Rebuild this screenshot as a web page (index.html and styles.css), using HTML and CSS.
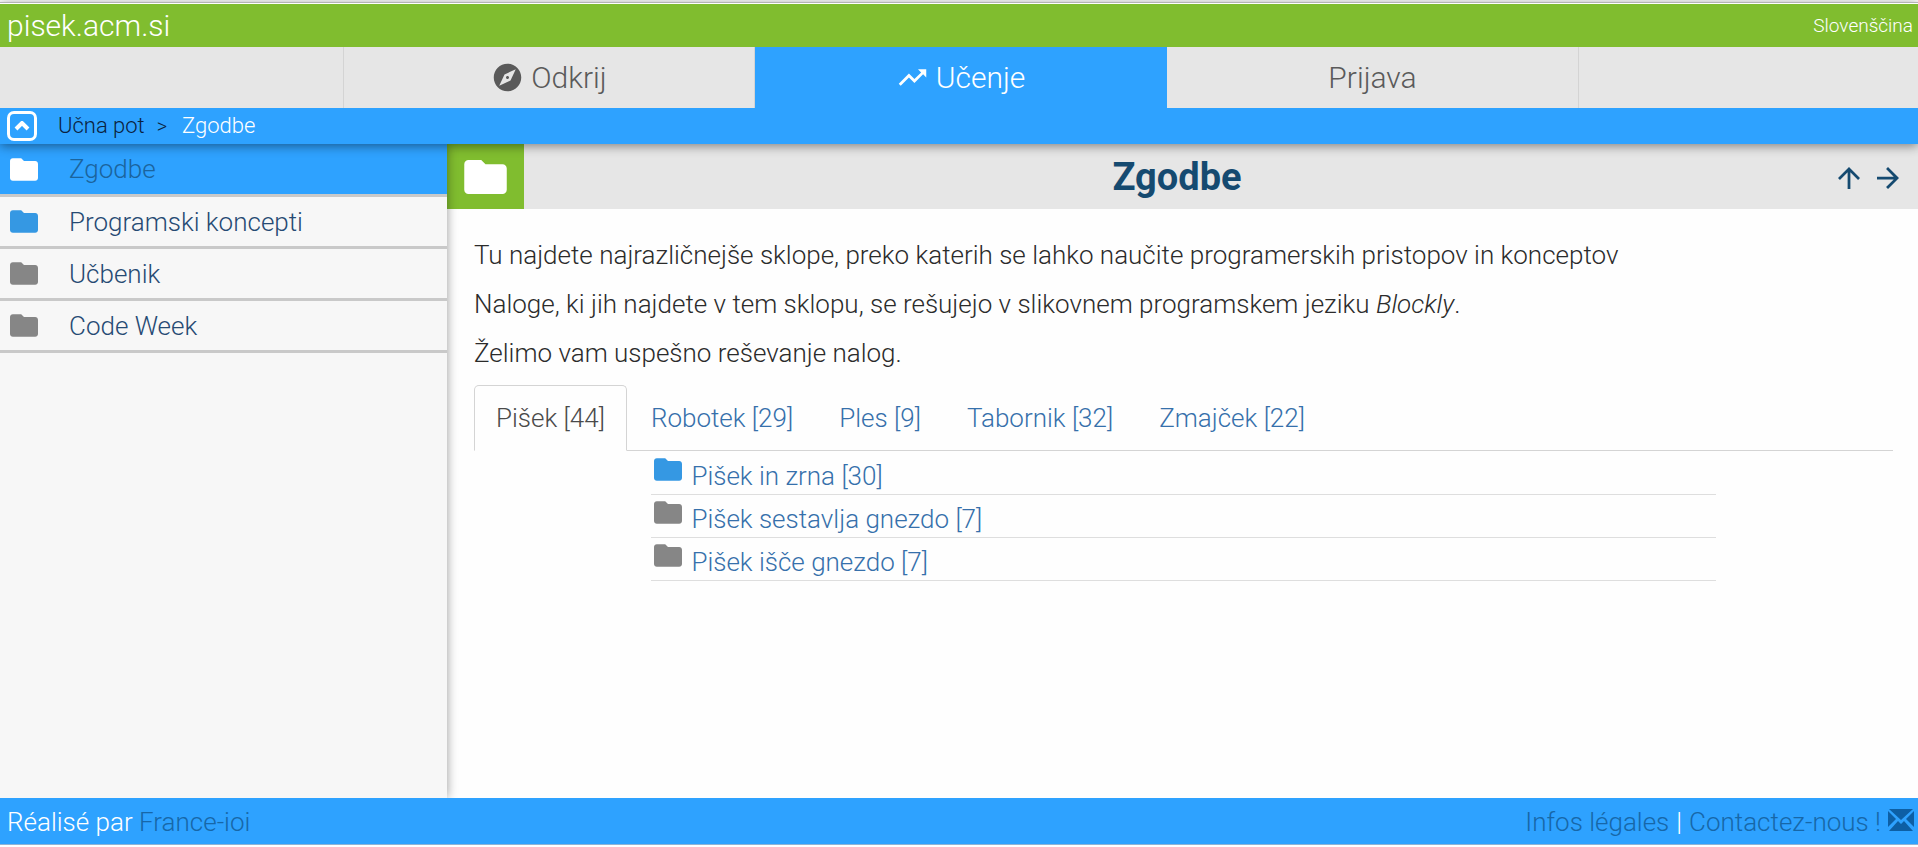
FILE: index.html
```html
<!DOCTYPE html>
<html lang="sl">
<head>
<meta charset="utf-8">
<title>pisek.acm.si</title>
<link rel="stylesheet" href="styles.css">
</head>
<body>
<svg class="defs" aria-hidden="true">
  <symbol id="folder" viewBox="2 4 20 16"><path d="M10 4H4c-1.1 0-1.99.9-1.99 2L2 18c0 1.1.9 2 2 2h16c1.1 0 2-.9 2-2V8c0-1.1-.9-2-2-2h-8l-2-2z"/></symbol>
</svg>
<header class="site-header">
  <div class="brand-bar">
    <a class="brand" href="#">pisek.acm.si</a>
    <a class="language" href="#">Slovenščina</a>
  </div>
  <nav class="main-nav">
    <a class="main-tab" href="#"><svg class="tab-icon" viewBox="0 0 24 24"><path d="M12 10.9c-.61 0-1.1.49-1.1 1.1s.49 1.1 1.1 1.1c.61 0 1.1-.49 1.1-1.1s-.49-1.1-1.1-1.1zM12 2C6.48 2 2 6.48 2 12s4.480 10 10 10 10-4.480 10-10S17.520 2 12 2zm2.190 12.190L6 18l3.810-8.190L18 6l-3.810 8.190z"/></svg>Odkrij</a>
    <a class="main-tab active" href="#"><svg class="tab-icon" viewBox="0 0 24 24"><path d="M16 6l2.290 2.290-4.880 4.880-4-4L2 16.590 3.410 18l6-6 4 4 6.300-6.290L22 12V6z"/></svg>Učenje</a>
    <a class="main-tab" href="#">Prijava</a>
  </nav>
  <nav class="breadcrumb">
    <button class="collapse" type="button" aria-label="Skrij"><svg viewBox="0 0 16 10"><path d="M2 8l6-6 6 6"/></svg></button>
    <a class="crumb" href="#">Učna pot</a>
    <span class="separator">&gt;</span>
    <a class="crumb current" href="#">Zgodbe</a>
  </nav>
</header>
<div class="layout">
  <nav class="sidebar">
    <a class="side-item selected" href="#"><svg class="folder white"><use href="#folder"/></svg>Zgodbe</a>
    <a class="side-item" href="#"><svg class="folder blue"><use href="#folder"/></svg>Programski koncepti</a>
    <a class="side-item" href="#"><svg class="folder gray"><use href="#folder"/></svg>Učbenik</a>
    <a class="side-item" href="#"><svg class="folder gray"><use href="#folder"/></svg>Code Week</a>
  </nav>
  <main class="content">
    <div class="title-bar">
      <div class="title-icon"><svg class="folder large white"><use href="#folder"/></svg></div>
      <h1 class="title">Zgodbe</h1>
      <div class="title-actions">
        <button class="arrow" type="button" aria-label="Gor"><svg viewBox="4 4 16 16"><path d="M4 12l1.410 1.410L11 7.830V20h2V7.830l5.580 5.590L20 12l-8-8-8 8z"/></svg></button>
        <button class="arrow" type="button" aria-label="Naprej"><svg viewBox="4 4 16 16"><path d="M12 4l-1.410 1.410L16.170 11H4v2h12.170l-5.580 5.590L12 20l8-8z"/></svg></button>
      </div>
    </div>
    <div class="body">
      <p>Tu najdete najrazličnejše sklope, preko katerih se lahko naučite programerskih pristopov in konceptov</p>
      <p>Naloge, ki jih najdete v tem sklopu, se rešujejo v slikovnem programskem jeziku <em>Blockly</em>.</p>
      <p>Želimo vam uspešno reševanje nalog.</p>
      <nav class="tabs">
        <a class="tab active" href="#">Pišek [44]</a>
        <a class="tab" href="#">Robotek [29]</a>
        <a class="tab" href="#">Ples [9]</a>
        <a class="tab" href="#">Tabornik [32]</a>
        <a class="tab" href="#">Zmajček [22]</a>
      </nav>
      <ul class="chapters">
        <li><a href="#"><svg class="folder blue"><use href="#folder"/></svg>Pišek in zrna [30]</a></li>
        <li><a href="#"><svg class="folder gray"><use href="#folder"/></svg>Pišek sestavlja gnezdo [7]</a></li>
        <li><a href="#"><svg class="folder gray"><use href="#folder"/></svg>Pišek išče gnezdo [7]</a></li>
      </ul>
    </div>
  </main>
</div>
<footer class="footer">
  <div>Réalisé par <a href="#">France-ioi</a></div>
  <div class="footer-links"><a href="#">Infos légales</a><span>|</span><a href="#">Contactez-nous !</a>
    <svg class="mail" viewBox="0 0 26 22"><path d="M1 0h24L13 11zM0 2l8 8-8 8zM26 2l-8 8 8 8zM10 12l3 3 3-3 9 10H1z"/></svg>
  </div>
</footer>
</body>
</html>
```
FILE: styles.css
```css
* { box-sizing: border-box; }

body {
  margin: 0;
  padding: 2px 0 1px;
  min-height: 100vh;
  display: flex;
  flex-direction: column;
  background: #fefefe;
  font-family: Roboto, "Liberation Sans", sans-serif;
  font-weight: 300;
  font-size: 26px;
  line-height: 36px;
  color: #2b2b2b;
}

a { color: inherit; text-decoration: none; }
button { padding: 0; border: 0; background: none; color: inherit; }
svg { display: block; flex: none; fill: currentColor; }
.defs { position: absolute; width: 0; height: 0; }

.site-header {
  position: relative;
  z-index: 2;
  border-top: 1px solid #b4b4b4;
  padding-top: 1px;
  box-shadow: 0 2px 10px rgba(0, 0, 0, 0.45);
}

.brand-bar {
  display: flex;
  justify-content: space-between;
  align-items: center;
  height: 43px;
  padding: 0 5px 0 7px;
  background: #80bd2f;
  color: #fff;
}
.brand { font-size: 30px; }
.language { font-size: 19px; }

.main-nav {
  display: flex;
  justify-content: center;
  height: 61px;
  padding-left: 4px;
  background: #e6e6e6;
  color: #5a5a5a;
  font-size: 30px;
}
.main-tab {
  display: flex;
  justify-content: center;
  align-items: center;
  gap: 7px;
  width: 412px;
  border-right: 1px solid #d4d4d4;
}
.main-tab:first-child { border-left: 1px solid #d4d4d4; }
.main-tab.active { background: #2ea2ff; border-color: #2ea2ff; color: #fff; }
.tab-icon { width: 33px; height: 33px; }

.breadcrumb {
  display: flex;
  align-items: center;
  height: 36px;
  padding-left: 7px;
  background: #2ea2ff;
  color: #0b2240;
  font-size: 22px;
}
.collapse {
  display: flex;
  justify-content: center;
  align-items: center;
  width: 30px;
  height: 30px;
  margin-right: 21px;
  border: 3px solid #fff;
  border-radius: 7px;
  color: #fff;
}
.collapse svg { width: 16px; height: 10px; fill: none; stroke: currentColor; stroke-width: 4; }
.separator { margin: 0 15px 0 12px; font-size: 20px; }
.current { color: #fff; }

.layout { display: flex; flex: 1; }

.sidebar {
  position: relative;
  z-index: 1;
  width: 447px;
  background: #f7f7f7;
  box-shadow: 0 0 10px rgba(0, 0, 0, 0.4);
}
.side-item {
  display: flex;
  align-items: center;
  gap: 31px;
  height: 52px;
  padding-left: 10px;
  border-bottom: 3px solid #c9c9c9;
  color: #264a73;
}
.side-item.selected { height: 53px; background: #2ea2ff; color: #1b649d; }

.folder { width: 28px; height: 23px; }
.folder.large { width: 43px; height: 34px; }
.white { color: #fff; }
.blue { color: #3598e3; }
.gray { color: #868686; }

.content { flex: 1; }
.title-bar {
  display: flex;
  align-items: center;
  height: 65px;
  background: #e6e6e6;
  color: #154a70;
}
.title-icon {
  display: flex;
  justify-content: center;
  align-items: center;
  width: 77px;
  height: 65px;
  background: #80bd2f;
}
.title { flex: 1; margin: 0; padding-right: 8px; text-align: center; font-size: 38px; font-weight: 700; }
.title-actions { display: flex; gap: 17px; padding: 2px 19px 0 0; }
.arrow svg { width: 22px; height: 22px; }

.body { padding: 28px 25px 0 27px; }
.body p { margin: 0 0 13px; }

.tabs { display: flex; gap: 2px; margin-top: 14px; border-bottom: 1px solid #d4d4d4; }
.tab {
  padding: 14px 21px;
  margin-bottom: -1px;
  border: 1px solid transparent;
  border-radius: 5px 5px 0 0;
  color: #3670ab;
}
.tab.active { border-color: #d4d4d4; border-bottom-color: #fefefe; background: #fefefe; color: #4a4a4a; }

.chapters { width: 75%; margin: 0 auto; padding: 1px 0 0; list-style: none; }
.chapters li { border-bottom: 1px solid #dedede; }
.chapters a { display: flex; gap: 9px; padding: 6px 0 0 3px; color: #3670ab; }

.footer {
  position: relative;
  z-index: 2;
  display: flex;
  justify-content: space-between;
  align-items: center;
  height: 47px;
  padding: 1px 4px 0 7px;
  margin-bottom: 1px;
  border-bottom: 1px solid #8fb4d6;
  background: #2ea2ff;
  color: #fff;
}
.footer a { color: #1767a8; }
.footer-links { display: flex; gap: 7px; }
.mail { width: 26px; height: 22px; margin-top: 5px; color: #0d5fa5; }
```
